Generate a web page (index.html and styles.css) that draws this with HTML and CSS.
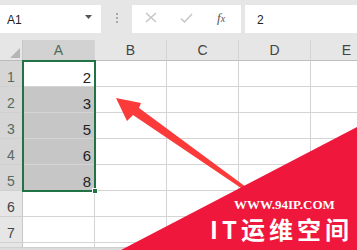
FILE: index.html
```html
<!DOCTYPE html>
<html lang="zh-CN">
<head>
    <meta charset="UTF-8">
    <title>Excel 选区</title>
    <link rel="stylesheet" href="styles.css">
</head>
<body>
    <div class="app">
        <div class="fbar">
            <div class="namebox">
                <span>A1</span>
                <svg class="caret" width="7" height="4" viewBox="0 0 7 4"><path d="M0 0h7L3.5 4z" fill="#555"/></svg>
            </div>
            <div class="grip"><i></i><i></i><i></i></div>
            <div class="btns">
                <svg width="12" height="11" viewBox="0 0 12 11"><path d="M1 1l10 9M11 1L1 10" stroke="#c2c2c2" stroke-width="1.3" fill="none"/></svg>
                <svg width="13" height="10" viewBox="0 0 13 10"><path d="M1 5.5l3.5 3.5L12 1" stroke="#c2c2c2" stroke-width="1.3" fill="none"/></svg>
                <span class="fx">f<sub>x</sub></span>
            </div>
            <div class="formula">2</div>
        </div>

        <div class="sheet">
            <div class="corner"><svg width="10" height="10" viewBox="0 0 10 10"><path d="M10 0v10H0z" fill="#b5b5b5"/></svg></div>
            <div class="ch on">A</div>
            <div class="ch">B</div>
            <div class="ch">C</div>
            <div class="ch">D</div>
            <div class="ch">E</div>

            <div class="rh on">1</div><div class="c num">2</div><div class="c"></div><div class="c"></div><div class="c"></div><div class="c"></div>
            <div class="rh on">2</div><div class="c num hl">3</div><div class="c"></div><div class="c"></div><div class="c"></div><div class="c"></div>
            <div class="rh on">3</div><div class="c num hl">5</div><div class="c"></div><div class="c"></div><div class="c"></div><div class="c"></div>
            <div class="rh on">4</div><div class="c num hl">6</div><div class="c"></div><div class="c"></div><div class="c"></div><div class="c"></div>
            <div class="rh on">5</div><div class="c num hl">8</div><div class="c"></div><div class="c"></div><div class="c"></div><div class="c"></div>
            <div class="rh">6</div><div class="c"></div><div class="c"></div><div class="c"></div><div class="c"></div><div class="c"></div>
            <div class="rh">7</div><div class="c"></div><div class="c"></div><div class="c"></div><div class="c"></div><div class="c"></div>
            <div class="rh"></div><div class="c"></div><div class="c"></div><div class="c"></div><div class="c"></div><div class="c"></div>

            <!-- selection frame A1:A5 -->
            <div class="sel"><i class="handle"></i></div>
        </div>

        <div class="tabs"></div>

        <!-- annotation drawn on top of the screenshot -->
        <svg class="overlay" width="357" height="250" viewBox="0 0 357 250">
            <polygon points="116,98 141,103 139,108 246,187 244,190 133,115 127,121" fill="#fb3a3a"/>
            <polygon points="357,127 357,250 121,250" fill="#f0173c"/>
        </svg>
        <div class="mark">
            <div class="url">WWW.94IP.COM</div>
            <div class="brand">IT运维空间</div>
        </div>
    </div>
</body>
</html>
```

FILE: styles.css
```css
* {
    box-sizing: border-box;
}
body {
    margin: 0;
    font-family: "Liberation Sans", Arial, sans-serif;
    color: #222;
}
.app {
    position: relative;
    width: 357px;
    height: 250px;
    display: flex;
    flex-direction: column;
    overflow: hidden;
    background: #e6e6e6;
}

/* formula bar */
.fbar {
    height: 40px;
    padding: 5px 0 7px;
    display: flex;
    flex: none;
}
.namebox {
    width: 101px;
    background: #fff;
    display: flex;
    align-items: center;
    padding: 0 0 0 7px;
    font-size: 12px;
    color: #222;
}
.namebox span {
    flex: 1;
    padding-top: 1px;
}
.caret {
    margin: 0 9px 4px 0;
}
.grip {
    width: 31px;
    display: flex;
    flex-direction: column;
    align-items: center;
    justify-content: center;
    gap: 2px;
    padding-bottom: 2px;
}
.grip i {
    width: 2px;
    height: 2px;
    background: #a8a8a8;
}
.btns {
    width: 109px;
    background: #fff;
    display: flex;
    align-items: center;
    padding: 0 0 3px 13px;
}
.btns svg:nth-child(2) {
    margin-left: 23px;
}
.fx {
    margin-left: 24px;
    font-family: "Liberation Serif", serif;
    font-style: italic;
    font-size: 13px;
    color: #555;
}
.fx sub {
    font-size: 10px;
    vertical-align: 0;
}
.formula {
    flex: 1;
    margin-left: 4px;
    background: #fff;
    font-size: 12px;
    padding: 8px 0 0 12px;
}

/* sheet grid */
.sheet {
    position: relative;
    flex: 1;
    display: grid;
    grid-template-columns: 23px repeat(5, 72px);
    grid-template-rows: 21px repeat(8, 26px);
    background: #fff;
    overflow: hidden;
}
.corner,
.ch,
.rh {
    background: #e6e6e6;
    border-right: 1px solid #c8c8c8;
    border-bottom: 1px solid #bdbdbd;
    color: #444;
}
.corner {
    display: flex;
    align-items: flex-end;
    justify-content: flex-end;
    padding: 0 2px 2px 0;
}
.ch {
    font-size: 14px;
    text-align: center;
    line-height: 21px;
    border-right-color: #d4d4d4;
}
.ch.on {
    background: #d2d2d2;
    color: #4d6b5a;
}
.rh {
    font-size: 14px;
    display: flex;
    align-items: flex-end;
    justify-content: center;
    padding-bottom: 1px;
    border-bottom-color: #d0d0d0;
}
.rh.on {
    background: #d6d6d6;
    color: #566a5e;
}
.c {
    border-right: 1px solid #d4d4d4;
    border-bottom: 1px solid #d4d4d4;
}
.num {
    font-size: 15px;
    display: flex;
    align-items: flex-end;
    justify-content: flex-end;
    line-height: 15px;
    padding: 0 3px 1px 0;
}
.hl {
    background: #c6c6c6;
}
.sel {
    position: absolute;
    left: 22px;
    top: 20px;
    width: 74px;
    height: 132px;
    border: 2px solid #217346;
}
.handle {
    position: absolute;
    right: -4px;
    bottom: -4px;
    width: 6px;
    height: 6px;
    background: #217346;
    border: 1px solid #fff;
}
.tabs {
    height: 3px;
    flex: none;
    background: #dcdcdc;
    border-top: 1px solid #d0d0d0;
}

/* watermark annotation */
.overlay {
    position: absolute;
    left: 0;
    top: 0;
}
.mark {
    position: absolute;
    left: 210px;
    top: 198px;
    color: #fff;
    white-space: nowrap;
}
.url {
    margin-left: 24px;
    font-family: "Liberation Serif", serif;
    font-weight: bold;
    font-size: 13px;
    line-height: 14px;
}
.brand {
    margin-top: 4px;
    font-family: "Noto Sans CJK SC", sans-serif;
    font-weight: bold;
    font-size: 24px;
    line-height: 25px;
    letter-spacing: 4px;
}
```
